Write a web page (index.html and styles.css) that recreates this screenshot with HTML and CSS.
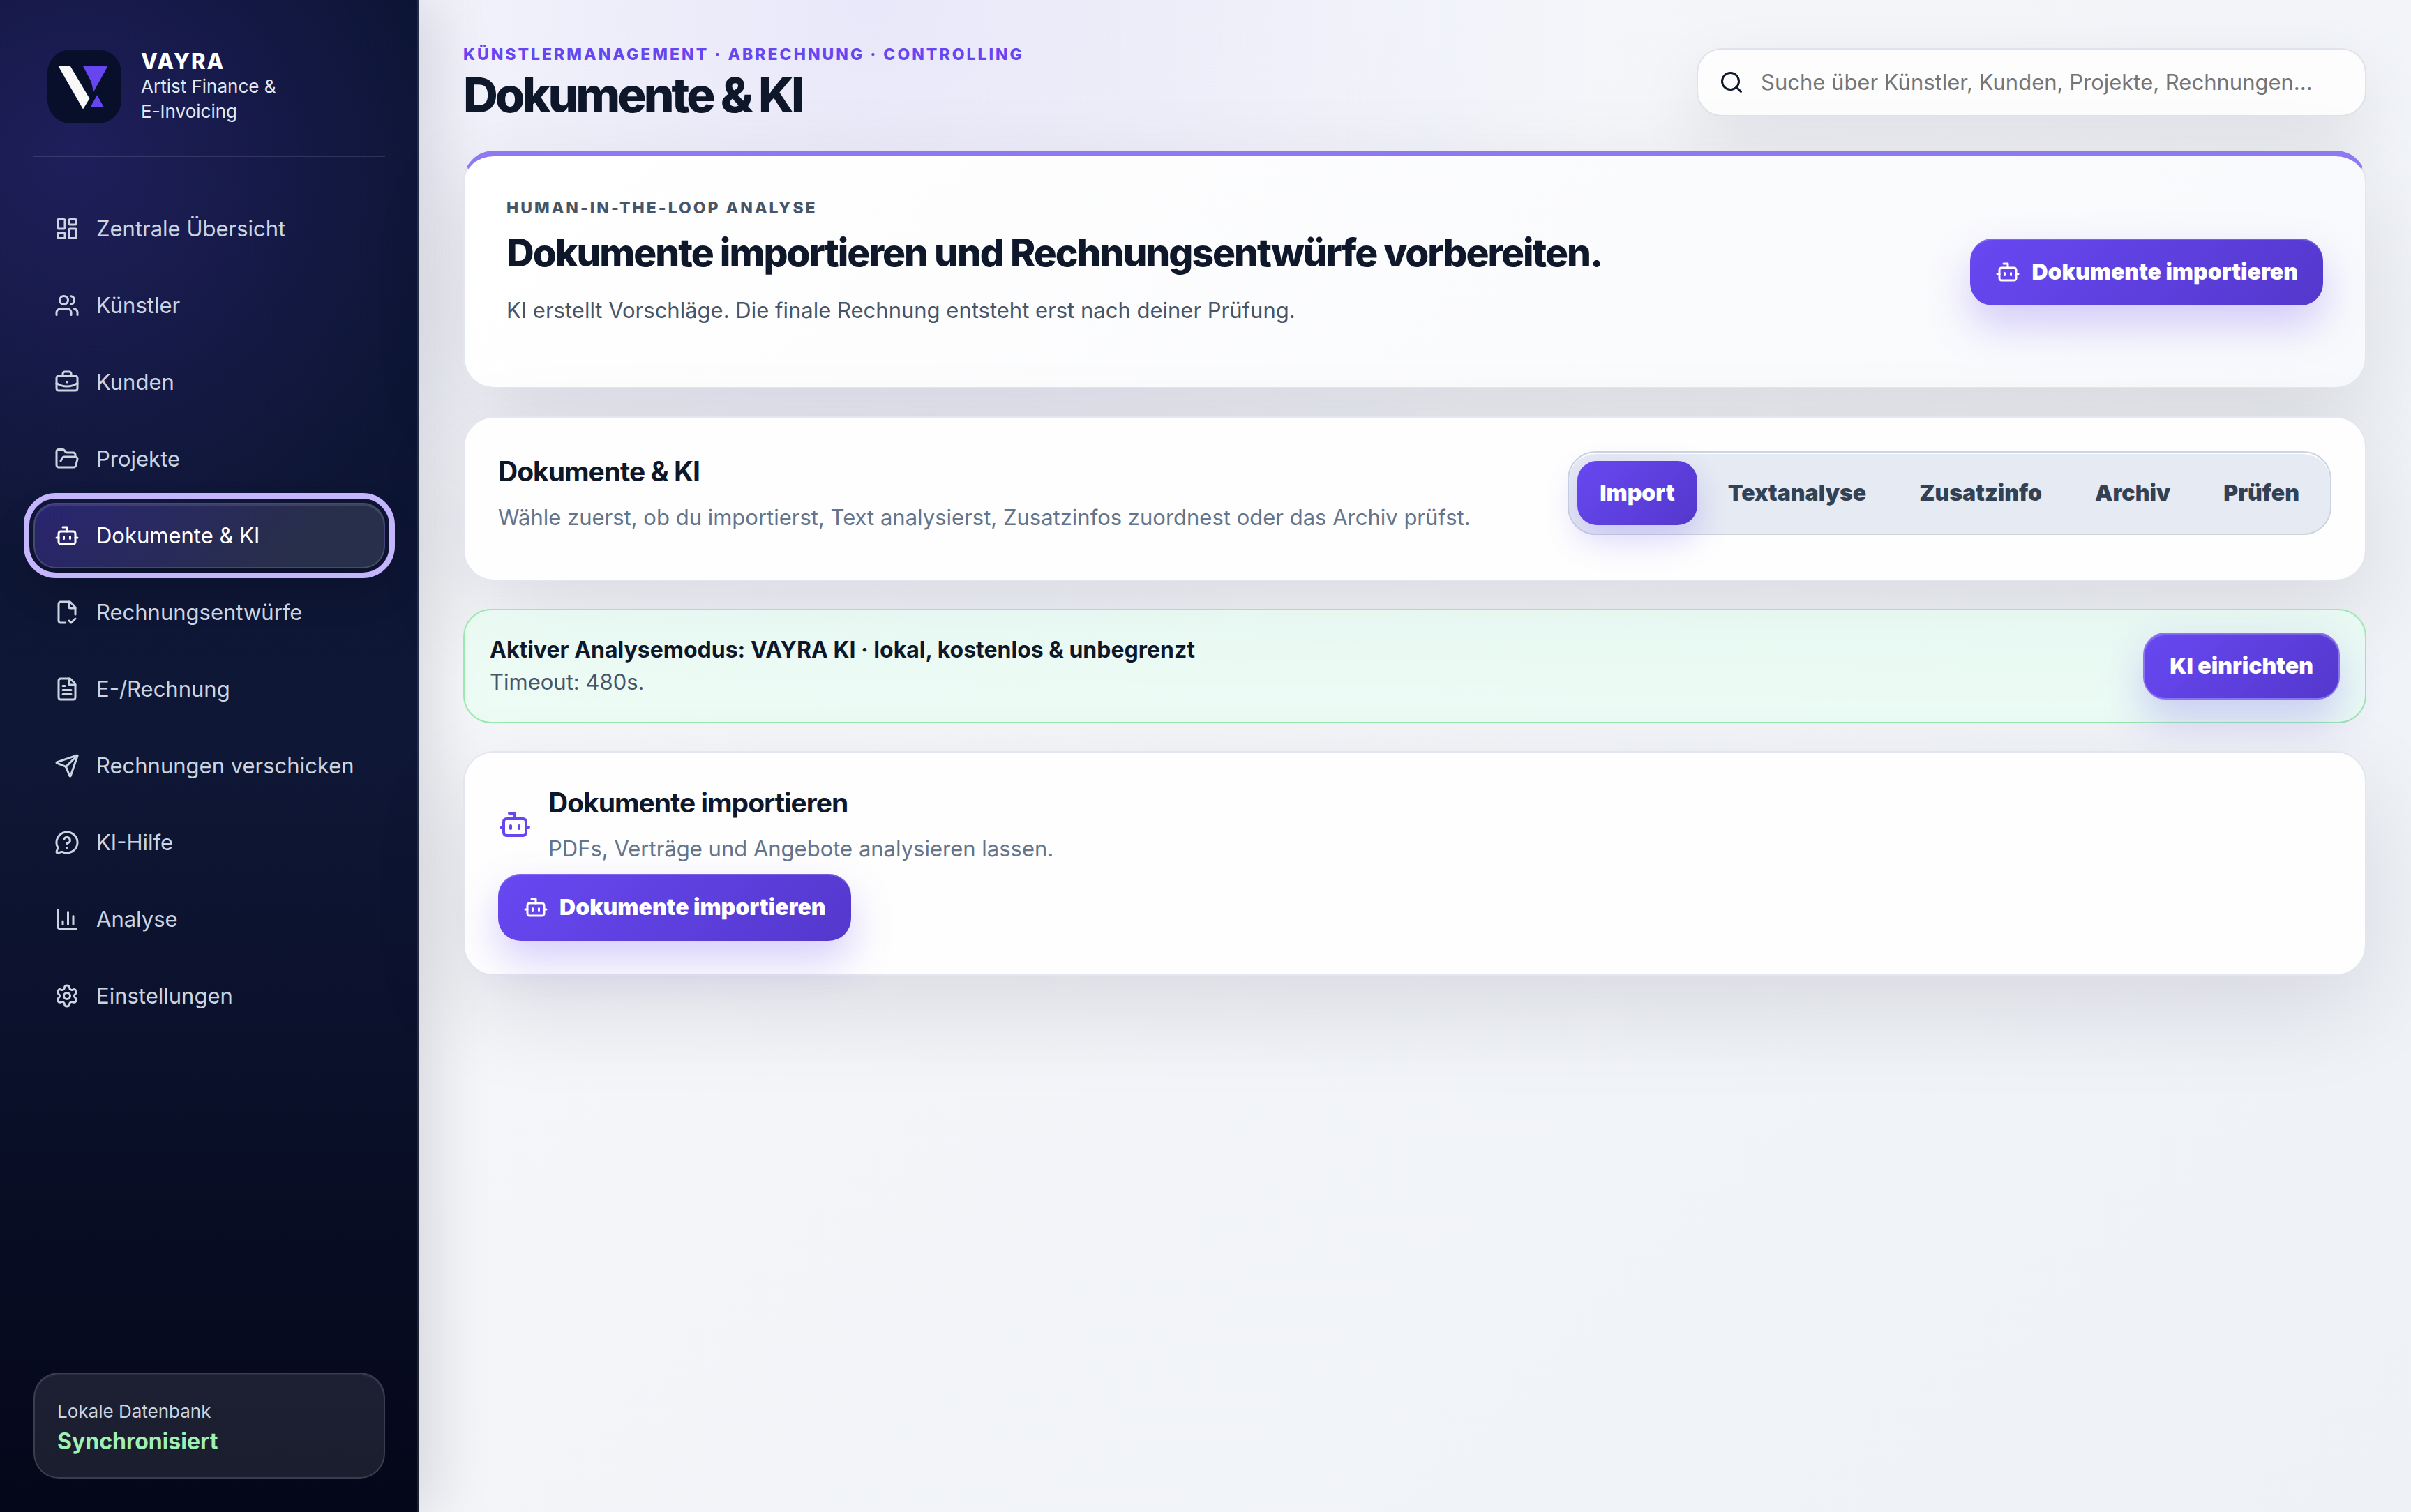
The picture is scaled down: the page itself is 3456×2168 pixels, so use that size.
FILE: index.html
```html
<!DOCTYPE html>
<html lang="de">
  <head>
    <meta charset="UTF-8" />
    <meta name="viewport" content="width=device-width, initial-scale=1.0" />
    <title>VAYRA – Dokumente &amp; KI</title>
    <link rel="stylesheet" href="styles.css" />
  </head>
  <body>
    <svg class="sprite" aria-hidden="true">
      <symbol id="icon-bot" viewBox="0 0 24 24">
        <path d="M12 8V4H8" />
        <rect width="16" height="12" x="4" y="8" rx="2" />
        <path d="M2 14h2M20 14h2M15 13v2M9 13v2" />
      </symbol>
    </svg>

    <div class="app">
      <aside class="sidebar">
        <div class="brand">
          <svg class="brand-logo" viewBox="0 0 108 108" aria-hidden="true">
            <rect width="108" height="108" rx="34" fill="#080f2b" />
            <path d="M16 24.5h17.5l28 47-9.5 15.5z" fill="#f8f8f8" />
            <path d="M52 24.5h36L66.5 63.5q0-13-6-23z" fill="#6546f0" />
            <path d="M72.5 66.5l10 18h-20z" fill="#6546f0" />
          </svg>
          <div class="brand-text">
            <strong>VAYRA</strong>
            <span>Artist Finance &amp;<br />E-Invoicing</span>
          </div>
        </div>

        <nav class="nav">
          <a href="#" class="nav-item">
            <svg class="icon" viewBox="0 0 24 24">
              <rect width="7" height="9" x="3" y="3" rx="1" />
              <rect width="7" height="5" x="14" y="3" rx="1" />
              <rect width="7" height="9" x="14" y="12" rx="1" />
              <rect width="7" height="5" x="3" y="16" rx="1" />
            </svg>
            Zentrale Übersicht
          </a>
          <a href="#" class="nav-item">
            <svg class="icon" viewBox="0 0 24 24">
              <path d="M16 21v-2a4 4 0 0 0-4-4H6a4 4 0 0 0-4 4v2" />
              <path d="M16 3.128a4 4 0 0 1 0 7.744" />
              <path d="M22 21v-2a4 4 0 0 0-3-3.87" />
              <circle cx="9" cy="7" r="4" />
            </svg>
            Künstler
          </a>
          <a href="#" class="nav-item">
            <svg class="icon" viewBox="0 0 24 24">
              <path d="M12 12h.01" />
              <path d="M16 6V4a2 2 0 0 0-2-2h-4a2 2 0 0 0-2 2v2" />
              <path d="M22 13a18.15 18.15 0 0 1-20 0" />
              <rect width="20" height="14" x="2" y="6" rx="2" />
            </svg>
            Kunden
          </a>
          <a href="#" class="nav-item">
            <svg class="icon" viewBox="0 0 24 24">
              <path
                d="m6 14 1.5-2.9A2 2 0 0 1 9.24 10H20a2 2 0 0 1 1.94 2.5l-1.54 6a2 2 0 0 1-1.95 1.5H4a2 2 0 0 1-2-2V5a2 2 0 0 1 2-2h3.9a2 2 0 0 1 1.69.9l.81 1.2a2 2 0 0 0 1.67.9H18a2 2 0 0 1 2 2v2"
              />
            </svg>
            Projekte
          </a>
          <a href="#" class="nav-item active" aria-current="page">
            <svg class="icon"><use href="#icon-bot" /></svg>
            Dokumente &amp; KI
          </a>
          <a href="#" class="nav-item">
            <svg class="icon" viewBox="0 0 24 24">
              <path d="M10.5 22H6a2 2 0 0 1-2-2V4a2 2 0 0 1 2-2h8a2.4 2.4 0 0 1 1.7.7l3.6 3.6A2.4 2.4 0 0 1 20 8v6" />
              <path d="M14 2v5a1 1 0 0 0 1 1h5" />
              <path d="m14 20 2 2 4-4" />
            </svg>
            Rechnungsentwürfe
          </a>
          <a href="#" class="nav-item">
            <svg class="icon" viewBox="0 0 24 24">
              <path d="M6 22a2 2 0 0 1-2-2V4a2 2 0 0 1 2-2h8a2.4 2.4 0 0 1 1.7.7l3.6 3.6A2.4 2.4 0 0 1 20 8v12a2 2 0 0 1-2 2z" />
              <path d="M14 2v5a1 1 0 0 0 1 1h5" />
              <path d="M10 9H8M16 13H8M16 17H8" />
            </svg>
            E-/Rechnung
          </a>
          <a href="#" class="nav-item">
            <svg class="icon" viewBox="0 0 24 24">
              <path
                d="M14.54 21.69a.5.5 0 0 0 .94-.02l6.5-19a.5.5 0 0 0-.64-.64l-19 6.5a.5.5 0 0 0-.02.94l7.93 3.18a2 2 0 0 1 1.11 1.11z"
              />
              <path d="m21.85 2.15-10.94 10.94" />
            </svg>
            Rechnungen verschicken
          </a>
          <a href="#" class="nav-item">
            <svg class="icon" viewBox="0 0 24 24">
              <path
                d="M2.99 16.34a2 2 0 0 1 .1 1.17l-1.07 3.29a1 1 0 0 0 1.24 1.17l3.41-1a2 2 0 0 1 1.1.09 10 10 0 1 0-4.78-4.72"
              />
              <path d="M9.09 9a3 3 0 0 1 5.83 1c0 2-3 3-3 3" />
              <path d="M12 17h.01" />
            </svg>
            KI-Hilfe
          </a>
          <a href="#" class="nav-item">
            <svg class="icon" viewBox="0 0 24 24">
              <path d="M3 3v16a2 2 0 0 0 2 2h16" />
              <path d="M18 17V9M13 17V5M8 17v-3" />
            </svg>
            Analyse
          </a>
          <a href="#" class="nav-item">
            <svg class="icon" viewBox="0 0 24 24">
              <path
                d="M9.67 4.14a2.34 2.34 0 0 1 4.66 0 2.34 2.34 0 0 0 3.32 1.91 2.34 2.34 0 0 1 2.33 4.03 2.34 2.34 0 0 0 0 3.83 2.34 2.34 0 0 1-2.33 4.03 2.34 2.34 0 0 0-3.32 1.92 2.34 2.34 0 0 1-4.66 0 2.34 2.34 0 0 0-3.32-1.92 2.34 2.34 0 0 1-2.33-4.03 2.34 2.34 0 0 0 0-3.83 2.34 2.34 0 0 1 2.33-4.03 2.34 2.34 0 0 0 3.32-1.91"
              />
              <circle cx="12" cy="12" r="3" />
            </svg>
            Einstellungen
          </a>
        </nav>

        <div class="db-status">
          <span>Lokale Datenbank</span>
          <strong>Synchronisiert</strong>
        </div>
      </aside>

      <main class="main">
        <header class="topbar">
          <div>
            <p class="eyebrow">Künstlermanagement · Abrechnung · Controlling</p>
            <h1>Dokumente &amp; KI</h1>
          </div>
          <label class="search">
            <svg class="icon" viewBox="0 0 24 24" aria-hidden="true">
              <path d="m21 21-4.34-4.34" />
              <circle cx="11" cy="11" r="8" />
            </svg>
            <input
              type="search"
              aria-label="Suche"
              placeholder="Suche über Künstler, Kunden, Projekte, Rechnungen..."
            />
          </label>
        </header>

        <section class="card hero">
          <div>
            <p class="eyebrow muted">Human-in-the-loop Analyse</p>
            <h2>Dokumente importieren und Rechnungsentwürfe vorbereiten.</h2>
            <p class="hero-text">
              KI erstellt Vorschläge. Die finale Rechnung entsteht erst nach deiner Prüfung.
            </p>
          </div>
          <button type="button" class="btn">
            <svg class="icon"><use href="#icon-bot" /></svg>
            Dokumente importieren
          </button>
        </section>

        <section class="card">
          <div class="card-head">
            <div>
              <h3>Dokumente &amp; KI</h3>
              <p class="card-text">
                Wähle zuerst, ob du importierst, Text analysierst, Zusatzinfos zuordnest oder das Archiv prüfst.
              </p>
            </div>
            <div class="segmented">
              <button type="button" class="segment active">Import</button>
              <button type="button" class="segment">Textanalyse</button>
              <button type="button" class="segment">Zusatzinfo</button>
              <button type="button" class="segment">Archiv</button>
              <button type="button" class="segment">Prüfen</button>
            </div>
          </div>
        </section>

        <section class="notice">
          <div>
            <strong>Aktiver Analysemodus: VAYRA KI · lokal, kostenlos &amp; unbegrenzt</strong>
            <p>Timeout: 480s.</p>
          </div>
          <button type="button" class="btn btn-outlined">KI einrichten</button>
        </section>

        <section class="card">
          <div class="card-head card-head-icon">
            <svg class="icon icon-lg"><use href="#icon-bot" /></svg>
            <div>
              <h3>Dokumente importieren</h3>
              <p class="card-text">PDFs, Verträge und Angebote analysieren lassen.</p>
            </div>
          </div>
          <button type="button" class="btn">
            <svg class="icon"><use href="#icon-bot" /></svg>
            Dokumente importieren
          </button>
        </section>
      </main>
    </div>
  </body>
</html>
```

FILE: styles.css
```css
* {
  box-sizing: border-box;
}

body {
  margin: 0;
  font-family: "Inter", sans-serif;
  font-size: 31px;
  line-height: 46px;
  color: #0f172a;
  background:
    radial-gradient(circle at 36% 0, rgba(101, 70, 240, 0.09), transparent 34%),
    linear-gradient(135deg, #f8fafc, #f3f5f9 50%, #eef1f6);
}

h1,
h2,
h3,
p {
  margin: 0;
}

button,
input {
  font: inherit;
}

.sprite {
  display: none;
}

.icon {
  width: 36px;
  height: 36px;
  flex-shrink: 0;
  fill: none;
  stroke: currentColor;
  stroke-width: 2;
  stroke-linecap: round;
  stroke-linejoin: round;
}

.icon-lg {
  width: 48px;
  height: 48px;
  color: #6546f0;
}

.app {
  display: grid;
  grid-template-columns: 600px 1fr;
  min-height: 100vh;
}

/* Sidebar */
.sidebar {
  display: flex;
  flex-direction: column;
  padding: 48px;
  background:
    radial-gradient(circle at 18% 10%, rgba(101, 70, 240, 0.22), transparent 600px),
    linear-gradient(180deg, #0a1330, #0f1736 50%, #040719);
  box-shadow:
    inset -2px 0 0 rgba(255, 255, 255, 0.1),
    24px 0 80px rgba(2, 6, 23, 0.12);
}

.brand {
  display: flex;
  align-items: center;
  gap: 28px;
  padding: 22px 20px 45px;
  border-bottom: 2px solid rgba(255, 255, 255, 0.12);
}

.brand-logo {
  width: 106px;
  height: 106px;
}

.brand-text strong {
  display: block;
  line-height: 36px;
  font-weight: 800;
  letter-spacing: 2px;
  color: #fff;
}

.brand-text span {
  display: block;
  font-size: 26px;
  line-height: 36px;
  color: #e2e8f0;
}

.nav {
  display: flex;
  flex-direction: column;
  gap: 16px;
  padding-top: 56px;
}

.nav-item {
  display: flex;
  align-items: center;
  gap: 24px;
  height: 94px;
  padding: 0 28px;
  border: 2px solid transparent;
  border-radius: 32px;
  color: #cbd5e1;
  text-decoration: none;
}

.nav-item.active {
  color: #fff;
  border-color: rgba(255, 255, 255, 0.14);
  background: linear-gradient(135deg, rgba(101, 70, 240, 0.3), rgba(255, 255, 255, 0.11) 75%);
  box-shadow:
    inset 0 2px 0 rgba(255, 255, 255, 0.1),
    0 28px 60px rgba(0, 0, 0, 0.18);
  outline: 8px solid #c4b5fd;
  outline-offset: 6px;
}

.db-status {
  margin-top: auto;
  padding: 32px 32px 30px;
  border: 2px solid rgba(255, 255, 255, 0.14);
  border-radius: 36px;
  background: rgba(255, 255, 255, 0.09);
  box-shadow: inset 0 2px 0 rgba(255, 255, 255, 0.06);
}

.db-status span {
  display: block;
  font-size: 26px;
  line-height: 44px;
  color: #cbd5e1;
}

.db-status strong {
  display: block;
  font-size: 32px;
  line-height: 42px;
  color: #a0f0b4;
}

/* Main area */
.main {
  display: flex;
  flex-direction: column;
  gap: 40px;
  padding: 60px 64px;
}

.topbar {
  display: flex;
  align-items: center;
  justify-content: space-between;
}

.eyebrow {
  font-size: 23px;
  line-height: 36px;
  font-weight: 800;
  letter-spacing: 3px;
  text-transform: uppercase;
  color: #6546f0;
}

.eyebrow.muted {
  color: #475569;
}

h1 {
  font-size: 69px;
  line-height: 80px;
  font-weight: 800;
  letter-spacing: -4px;
}

.search {
  display: flex;
  align-items: center;
  gap: 24px;
  width: 960px;
  height: 98px;
  padding: 0 30px;
  border: 2px solid #dfe3ea;
  border-radius: 36px;
  background: #fdfdfe;
  box-shadow: 0 36px 100px rgba(2, 6, 23, 0.09);
}

.search input {
  flex: 1;
  min-width: 0;
  padding: 0;
  border: 0;
  outline: 0;
  background: transparent;
}

.search input::placeholder {
  color: #757575;
}

.card {
  padding: 48px;
  border: 2px solid #e2e6ed;
  border-radius: 44px;
  background: #fefefe;
  box-shadow: 0 48px 140px rgba(2, 6, 23, 0.11);
}

.hero {
  display: flex;
  align-items: center;
  justify-content: space-between;
  padding: 56px 60px;
  border-top: 8px solid #8f79f3;
  background: linear-gradient(135deg, #fff, #f8f9fc);
}

h2 {
  margin: 14px 0 28px;
  font-size: 55px;
  line-height: 64px;
  font-weight: 800;
  letter-spacing: -2px;
}

.hero-text {
  margin-bottom: 31px;
  color: #475569;
}

.card-head {
  display: flex;
  align-items: center;
  justify-content: space-between;
  margin-bottom: 16px;
}

.card-head-icon {
  justify-content: flex-start;
  gap: 24px;
}

h3 {
  margin-bottom: 22px;
  font-size: 39px;
  line-height: 48px;
  font-weight: 700;
  letter-spacing: -1px;
}

.card-text {
  line-height: 40px;
  color: #64748b;
}

.btn {
  display: inline-flex;
  align-items: center;
  justify-content: center;
  gap: 16px;
  height: 96px;
  padding: 0 36px;
  border: 0;
  border-radius: 32px;
  font-size: 32px;
  font-weight: 900;
  color: #fff;
  background: linear-gradient(135deg, #6748f2, #5438cc);
  box-shadow:
    inset 0 2px 0 rgba(255, 255, 255, 0.18),
    0 28px 60px rgba(101, 70, 240, 0.26);
  cursor: pointer;
}

.btn-outlined {
  border: 2px solid #8b74ef;
}

.segmented {
  display: flex;
  gap: 12px;
  padding: 12px;
  border: 2px solid #cbd5e1;
  border-radius: 40px;
  background: #e6ebf3;
  box-shadow: inset 0 2px 0 #fff;
}

.segment {
  height: 92px;
  padding: 0 32px;
  border: 0;
  border-radius: 28px;
  font-size: 32px;
  font-weight: 900;
  color: #334155;
  background: transparent;
  cursor: pointer;
}

.segment.active {
  color: #fff;
  background: linear-gradient(135deg, #6748f2, #5438cc);
  box-shadow: 0 20px 48px rgba(101, 70, 240, 0.24);
}

.notice {
  display: flex;
  align-items: center;
  justify-content: space-between;
  padding: 32px 36px;
  border: 2px solid #9be8b0;
  border-radius: 40px;
  background: rgba(232, 255, 242, 0.65);
}

.notice strong {
  font-size: 32px;
}

.notice p {
  color: #475569;
}
```
